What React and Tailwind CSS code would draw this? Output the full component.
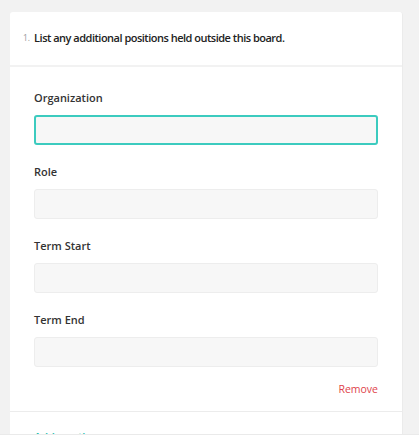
import React from 'react';

const fields = ['Organization', 'Role', 'Term Start', 'Term End'];

const Field = ({ label, focused, last }) => (
  <div className={last ? '' : 'mb-[19px]'}>
    <div className="h-[16px] leading-[16px] text-[11px] font-semibold text-[#333] mb-[9px]">{label}</div>
    <div
      className={`h-[30px] rounded-[3px] bg-[#f7f7f7] ${
        focused ? 'border-2 border-[#3ccbbf]' : 'border border-[#ededed]'
      }`}
    />
  </div>
);

const App = () => {
  return (
    <div
      className="h-[441px] flex flex-col overflow-hidden bg-[#f2f2f2]"
      style={{ fontFamily: '"Open Sans", "Liberation Sans", sans-serif' }}
    >
      <div className="flex-1 overflow-hidden pt-[12px] pl-[10px] pr-[16px]">
        <div className="bg-white rounded-t-[3px] border-r border-[#ebebeb]">
          {/* Question header */}
          <div className="h-[55px] flex items-center pl-[13px] border-b-2 border-[#f2f2f2]">
            <span className="text-[8.5px] text-[#999] mr-[4px]">1.</span>
            <span className="text-[11px] tracking-[-0.5px] font-semibold text-[#222]">
              List any additional positions held outside this board.
            </span>
          </div>

          {/* Entry */}
          <div className="px-[24px] pt-[23px] pb-[14px] border-b border-[#ececec]">
            {fields.map((f, i) => (
              <Field key={f} label={f} focused={i === 0} last={i === fields.length - 1} />
            ))}
            <div className="mt-[14px] h-[16px] leading-[16px] text-right text-[10.5px] text-[#e0434b]">
              Remove
            </div>
          </div>

          <div className="px-[24px] pt-[17px] text-[11px] font-semibold leading-[16px] text-[#1fbfb0]">Add another</div>
        </div>
      </div>
      <div className="h-[7px] bg-white border-t border-[#eaeaea]" />
    </div>
  );
};

export default App;
